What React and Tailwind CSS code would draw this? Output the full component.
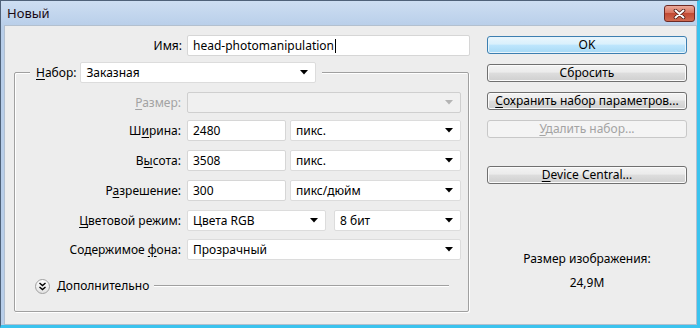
import React from 'react';

const Arrow = ({ disabled }) => (
  <svg width="8" height="5" viewBox="0 0 8 5">
    <path d="M0 0h8L4 4.5z" fill={disabled ? '#b4b4b4' : '#000'} />
  </svg>
);

const Select = ({ value, className = '', disabled }) => (
  <div
    className={`flex items-center h-[21px] rounded-[2px] border pl-[5px] pr-[7px] ${
      disabled ? 'border-[#cfcfcf] bg-[#f0f0f0]' : 'border-[#dcdcdc] bg-white'
    } ${className}`}
  >
    <span className="flex-1 truncate">{value}</span>
    <Arrow disabled={disabled} />
  </div>
);

const Input = ({ value, className = '' }) => (
  <div className={`flex items-center h-[21px] rounded-[2px] border border-[#d6d6d6] bg-white pl-[5px] ${className}`}>
    {value}
  </div>
);

const Label = ({ children, disabled }) => (
  <div className={`w-[167px] text-right pr-[1px] ${disabled ? 'text-[#a3a3a3]' : ''}`}>{children}</div>
);

const Btn = ({ children, primary, disabled, className = '' }) => {
  let look = 'border-[#707070] bg-[linear-gradient(#f3f3f3,#ebebeb_45%,#dddddd_50%,#cfcfcf)] shadow-[inset_0_0_0_1px_#fbfbfb]';
  if (primary) look = 'border-[#3c7fb1] bg-[linear-gradient(#eaf6fd,#d9f0fc_45%,#bee6fd_50%,#a7d9f5)] shadow-[inset_0_0_0_1px_#e8f4fb]';
  if (disabled) look = 'border-[#c8c8c8] bg-[#f4f4f4] text-[#a3a3a3]';
  return (
    <div className={`h-[18px] flex items-center justify-center rounded-[3px] border ${look} ${className}`}>
      {children}
    </div>
  );
};

const U = ({ children }) => <span className="underline underline-offset-2">{children}</span>;

export default function App() {
  return (
    <div className="w-[700px] h-[328px] flex flex-col border-l border-t border-[#4f6279] border-r-[3px] border-b-[3px] border-r-[#3bc3ee] border-b-[#3bc3ee] bg-[linear-gradient(#cddef2,#b8cee9_26px,#b8cee9)] font-['Noto_Sans',sans-serif] text-[12px] leading-[16px] text-black">
      {/* Title bar */}
      <div className="h-[24px] flex items-start justify-between pl-[6px] pr-[2px]">
        <div className="mt-[4px] text-[13px] text-[#1a0a14]">Новый</div>
        <div className="mt-[4px] w-[31px] h-[17px] rounded-[3px] border border-[#6d2a25] bg-[linear-gradient(#eaaa9c,#d97560_45%,#c24a34_50%,#d06a50)] flex items-center justify-center">
          <svg width="13" height="10" viewBox="0 0 13 10">
            <path d="M2.5 1.5l8 7M10.5 1.5l-8 7" stroke="#4a1a14" strokeWidth="3.6" strokeLinecap="round" />
            <path d="M2.5 1.5l8 7M10.5 1.5l-8 7" stroke="#fff" strokeWidth="2" strokeLinecap="round" />
          </svg>
        </div>
      </div>

      {/* Client area */}
      <div className="flex-1 ml-[3px] flex border border-[#b3c0cf] bg-[#ededed]">
        {/* Left column */}
        <div className="w-[465px] flex flex-col">
          <div className="mt-[9px] flex items-center">
            <div className="w-[177px] text-right">Имя:</div>
            <Input value={<span>head-photomanipulation<span className="inline-block w-[1px] h-[14px] bg-black align-middle ml-[1px]" /></span>} className="ml-[5px] w-[283px] border-[#a9c3e3]" />
          </div>

          <fieldset className="mt-[6px] ml-[9px] w-[455px] h-[250px] border border-[#a0a0a0] rounded-[2px] pl-[15px] shadow-[inset_1px_1px_0_#fff,1px_1px_0_#fff]">
            <legend className="flex items-center bg-[#ededed] px-[6px]">
              <span className="mr-[4px]"><U>Н</U>абор:</span>
              <Select value="Заказная" className="w-[236px]" />
            </legend>
            <div className="-ml-[15px] flex flex-col">
              <div className="mt-[9px] flex items-center">
                <Label disabled><U>Р</U>азмер:</Label>
                <Select disabled value="" className="ml-[5px] w-[274px]" />
              </div>
              <div className="mt-[7px] flex items-center">
                <Label>Ш<U>и</U>рина:</Label>
                <Input value="2480" className="ml-[5px] w-[99px]" />
                <Select value="пикс." className="ml-[4px] w-[171px]" />
              </div>
              <div className="mt-[9px] flex items-center">
                <Label>В<U>ы</U>сота:</Label>
                <Input value="3508" className="ml-[5px] w-[99px]" />
                <Select value="пикс." className="ml-[4px] w-[171px]" />
              </div>
              <div className="mt-[9px] flex items-center">
                <Label>Р<U>а</U>зрешение:</Label>
                <Input value="300" className="ml-[5px] w-[99px]" />
                <Select value="пикс/дюйм" className="ml-[4px] w-[171px]" />
              </div>
              <div className="mt-[9px] flex items-center">
                <Label><U>Ц</U>ветовой режим:</Label>
                <Select value="Цвета RGB" className="ml-[5px] w-[139px]" />
                <Select value="8 бит" className="ml-[8px] w-[127px]" />
              </div>
              <div className="mt-[8px] flex items-center">
                <Label>Содержимое <U>ф</U>она:</Label>
                <Select value="Прозрачный" className="ml-[5px] w-[274px]" />
              </div>
              <div className="mt-[18px] h-[16px] flex items-center pl-[20px] pr-[19px]">
                <div className="w-[15px] h-[15px] rounded-full border border-[#a0a0a0] bg-[linear-gradient(#ffffff,#e2e2e2)] flex items-center justify-center">
                  <svg width="9" height="9" viewBox="0 0 9 9">
                    <path d="M1.5 1l3 2.5 3-2.5M1.5 5l3 2.5 3-2.5" stroke="#000" strokeWidth="1.4" fill="none" />
                  </svg>
                </div>
                <span className="ml-[7px]">Дополнительно</span>
                <div className="ml-[5px] flex-1 h-[2px] border-t border-[#a0a0a0] border-b border-b-white" />
              </div>
            </div>
          </fieldset>
        </div>

        {/* Right column */}
        <div className="ml-[17px] w-[200px] flex flex-col">
          <Btn primary className="mt-[10px]">OK</Btn>
          <Btn className="mt-[10px]">Сбросить</Btn>
          <Btn className="mt-[10px]"><span><U>С</U>охранить набор параметров...</span></Btn>
          <Btn disabled className="mt-[10px]"><span><U>У</U>далить набор...</span></Btn>
          <Btn className="mt-[28px]"><span><U>D</U>evice Central...</span></Btn>
          <div className="mt-[67px] text-center">Размер изображения:</div>
          <div className="mt-[8px] text-center">24,9M</div>
        </div>
      </div>
    </div>
  );
}
